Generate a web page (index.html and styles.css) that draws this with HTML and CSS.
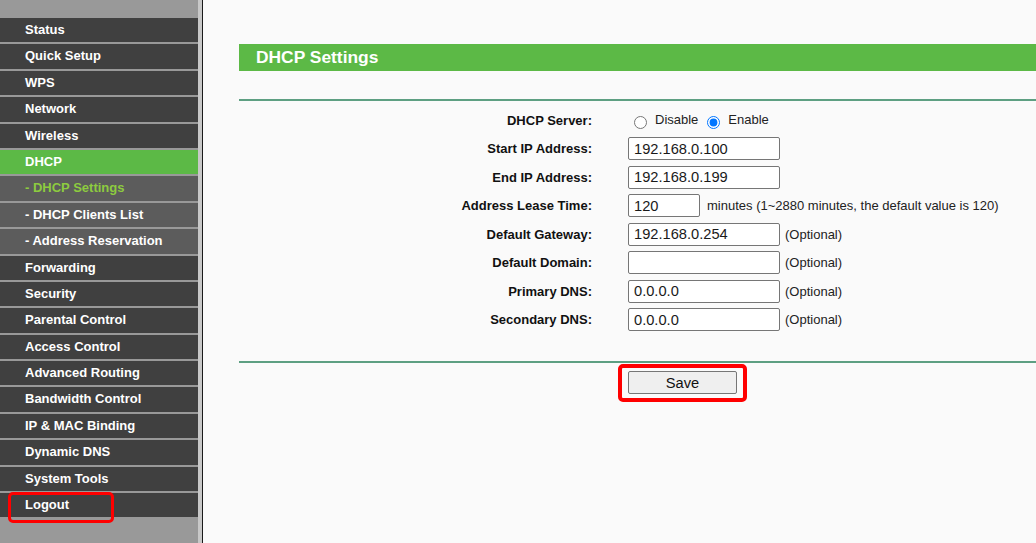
FILE: index.html
```html
<!DOCTYPE html>
<html>
<head>
<meta charset="utf-8">
<link rel="stylesheet" href="styles.css">
</head>
<body>
<div class="page">
  <nav class="sidebar">
    <ul class="menu">
      <li class="item">Status</li>
      <li class="item">Quick Setup</li>
      <li class="item">WPS</li>
      <li class="item">Network</li>
      <li class="item">Wireless</li>
      <li class="item active">DHCP</li>
      <li class="item sub current">- DHCP Settings</li>
      <li class="item sub">- DHCP Clients List</li>
      <li class="item sub">- Address Reservation</li>
      <li class="item">Forwarding</li>
      <li class="item">Security</li>
      <li class="item">Parental Control</li>
      <li class="item">Access Control</li>
      <li class="item">Advanced Routing</li>
      <li class="item">Bandwidth Control</li>
      <li class="item">IP &amp; MAC Binding</li>
      <li class="item">Dynamic DNS</li>
      <li class="item">System Tools</li>
      <li class="item logout"><span class="hl-logout"></span>Logout</li>
    </ul>
  </nav>
  <main class="content">
    <div class="title-bar">DHCP Settings</div>
    <hr class="rule rule-top">
    <div class="form">
      <div class="label">DHCP Server:</div>
      <div class="field">
        <input type="radio" name="srv" class="radio r1"><span class="rlabel">Disable</span>
        <input type="radio" name="srv" class="radio r2" checked><span class="rlabel">Enable</span>
      </div>

      <div class="label">Start IP Address:</div>
      <div class="field"><input class="txt" type="text" value="192.168.0.100"></div>

      <div class="label">End IP Address:</div>
      <div class="field"><input class="txt" type="text" value="192.168.0.199"></div>

      <div class="label">Address Lease Time:</div>
      <div class="field"><input class="txt short" type="text" value="120"><span class="note minutes">minutes (1~2880 minutes, the default value is 120)</span></div>

      <div class="label">Default Gateway:</div>
      <div class="field"><input class="txt" type="text" value="192.168.0.254"><span class="note">(Optional)</span></div>

      <div class="label">Default Domain:</div>
      <div class="field"><input class="txt" type="text" value=""><span class="note">(Optional)</span></div>

      <div class="label">Primary DNS:</div>
      <div class="field"><input class="txt" type="text" value="0.0.0.0"><span class="note">(Optional)</span></div>

      <div class="label">Secondary DNS:</div>
      <div class="field"><input class="txt" type="text" value="0.0.0.0"><span class="note">(Optional)</span></div>
    </div>
    <hr class="rule rule-bottom">
    <div class="actions">
      <div></div>
      <div class="save-wrap"><button class="save">Save</button><span class="hl-save"></span></div>
    </div>
  </main>
</div>
</body>
</html>
```
FILE: styles.css
```css
html, body {
  margin: 0;
  padding: 0;
  height: 100%;
  overflow: hidden;
}
body {
  font-family: "Liberation Sans", Arial, sans-serif;
  background: #fafafa;
}
.page {
  display: flex;
  height: 543px;
}
.sidebar {
  width: 198px;
  flex: none;
  background: #999999;
  border-right: 4px solid #c8c8c8;
  box-shadow: 1px 0 0 #1a1a1a;
  padding-top: 18px;
  box-sizing: content-box;
}
.menu {
  list-style: none;
  margin: 0;
  padding: 0;
}
.item {
  position: relative;
  height: 24.4px;
  line-height: 24.4px;
  margin-bottom: 2px;
  background: #404040;
  color: #ffffff;
  font-size: 13px;
  font-weight: bold;
  padding-left: 25px;
  white-space: nowrap;
}
.item.active {
  background: #5cb946;
}
.item.sub {
  background: #5c5c5c;
}
.item.current {
  color: #8dcb3f;
}
.hl-logout {
  position: absolute;
  left: 8px;
  top: -1px;
  width: 106px;
  height: 31px;
  box-sizing: border-box;
  border: 3.5px solid #ff0000;
  border-radius: 5px;
}
.content {
  flex: 1;
  min-width: 0;
  margin-left: 1px;
  padding: 44px 0 0 36px;
}
.title-bar {
  height: 27px;
  line-height: 27px;
  background: #5cb946;
  color: #ffffff;
  font-size: 17.4px;
  font-weight: bold;
  padding-left: 17px;
}
.rule {
  border: 0;
  height: 2px;
  margin: 0;
  background: #5d9f82;
  border-bottom: 0;
}
.rule-top {
  margin-top: 28px;
}
.rule-bottom {
  margin-top: 27px;
}
.form {
  display: grid;
  grid-template-columns: 353px 1fr;
  column-gap: 36px;
  grid-auto-rows: 28.5px;
  margin-top: 5px;
}
.label {
  text-align: right;
  font-size: 13px;
  font-weight: bold;
  color: #111111;
  display: flex;
  align-items: center;
  justify-content: flex-end;
}
.field {
  display: flex;
  align-items: center;
  font-size: 13px;
  color: #222222;
}
.radio {
  width: 13px;
  height: 13px;
  margin: 4px 8px 0 6px;
}
.radio.r2 {
  margin-left: 9px;
}
.rlabel {
  font-size: 13px;
  color: #222222;
  margin-top: -2px;
}
.txt {
  width: 152px;
  height: 23px;
  box-sizing: border-box;
  border: 1px solid #767676;
  border-radius: 2px;
  background: #ffffff;
  padding: 0 5px;
  font-family: "Liberation Sans", Arial, sans-serif;
  font-size: 14.67px;
  color: #1a1a1a;
  margin: 0;
}
.txt.short {
  width: 72px;
}
.note {
  margin-left: 5px;
}
.note.minutes {
  margin-left: 7px;
}
.actions {
  display: grid;
  grid-template-columns: 353px 1fr;
  column-gap: 36px;
  margin-top: 8px;
}
.save-wrap {
  position: relative;
  width: 109px;
  height: 23px;
}
.save {
  width: 109px;
  height: 23px;
  box-sizing: border-box;
  border: 1px solid #767676;
  border-radius: 2px;
  background: #efefef;
  font-family: "Liberation Sans", Arial, sans-serif;
  font-size: 14.67px;
  color: #111111;
  padding: 0;
  margin: 0;
}
.hl-save {
  position: absolute;
  left: -10px;
  right: -10px;
  top: -7px;
  bottom: -8px;
  border: 4px solid #ff0000;
  border-radius: 5px;
}
```
